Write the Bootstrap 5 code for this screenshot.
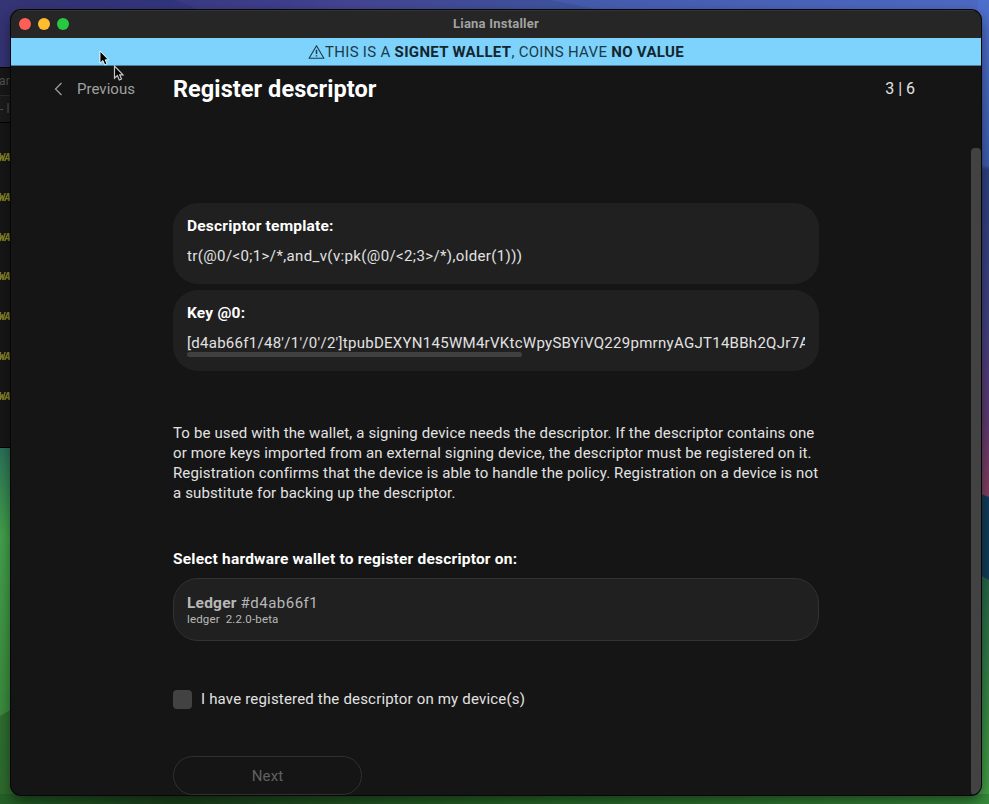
<!DOCTYPE html>
<html lang="en">
<head>
<meta charset="utf-8">
<meta name="viewport" content="width=device-width, initial-scale=1">
<title>Liana Installer</title>
<link href="https://cdn.jsdelivr.net/npm/bootstrap@5.3.0/dist/css/bootstrap.min.css" rel="stylesheet">
<style>
body{height:804px;overflow:hidden;background:#2b3a78;color:#e2e2e2;font:15px/20px Roboto,"Noto Sans",sans-serif;letter-spacing:.13px}
b,.pick{font-size:15.5px;letter-spacing:.21px}
.desk{position:absolute;inset:0;width:989px;height:804px}
.terminal{position:absolute;left:0;top:67px;width:12px;height:381px;background:#161616;border:solid #000;border-width:1px 0;color:#555;font-size:12px;white-space:nowrap}
.term-title{height:28px;line-height:27px;border-bottom:1px solid #2b2b2b;background:#171717;text-indent:-1px}
.term-tab{height:27px;line-height:27px;border-bottom:1px solid #000;background:#1b1b1b}
.term-log{padding-top:15px}
.term-log div{height:39.8px;color:#8d8d28;font:italic bold 10px/40px "DejaVu Sans Mono",monospace;letter-spacing:-.4px;text-indent:-1px}
.win{position:absolute;left:11px;top:10px;width:970px;height:785px;background:#151515;border-radius:10px;box-shadow:0 0 0 1px #070707,0 6px 14px rgba(0,0,0,.5)}
.titlebar{height:28px;background:#262626;box-shadow:inset 0 1px #333;padding-left:7.5px}
.dots{gap:7px}
.dot{width:12px;height:12px;border-radius:50%}
.dot-close{background:#ff5f57}
.dot-min{background:#febc2e}
.dot-max{background:#28c840}
.win-name{font-size:13px;font-weight:700;color:#a2a2a2;letter-spacing:.22px}
.net-banner{height:28px;background:#7dd3fc;color:#1c3a48;border-bottom:1px solid #4c8099;letter-spacing:.3px}
.net-banner b{color:#14252e;font-size:15px;letter-spacing:.32px}
.top-row{height:46px}
.previous{color:#a0a0a0;width:162px;padding-left:42px;letter-spacing:.03px}
.previous svg{margin-right:14px}
.page-title{font-size:23.5px;line-height:30px;font-weight:700;color:#fff;letter-spacing:.06px}
.step{padding-right:66px;font-size:16px;letter-spacing:0}
.content{width:646px;margin-left:162px;padding-top:91px}
.panel{background:#202020;border-radius:25px;height:81px;padding:13px 14px;margin-bottom:6px}
.panel b{color:#fff}
.panel-text{margin-top:10px;white-space:nowrap;overflow:hidden}
.template{letter-spacing:.375px}
.xpub{letter-spacing:.28px}
.h-track{width:335px;height:5px;border-radius:3px;background:#404040;margin-top:-1px}
.note{margin-top:52px;white-space:nowrap}
.pick{margin-top:46px;color:#fff}
.device{height:63px;margin-top:9px;border:1px solid #323232;border-radius:25px;background:#202020;padding:14px 13px;color:#b8b8b8}
.fingerprint{letter-spacing:.5px}
.device-meta{font-size:11.5px;line-height:13px;letter-spacing:.15px}
.check-row{margin-top:48px;gap:9px;letter-spacing:.18px}
.tick{width:19px;height:19px;border-radius:4px;background:#424242}
.next{width:189px;height:39px;margin-top:47px;border:1px solid #303030;border-radius:20px;color:#616161}
.v-track{position:absolute;right:0;top:138px;width:10px;bottom:0;background:#424242;border-radius:5px 5px 8px 5px}
.pointer{position:absolute;left:98px;top:49px}
</style>
<script src="https://cdn.jsdelivr.net/npm/bootstrap@5.3.0/dist/js/bootstrap.bundle.min.js"></script>
</head>
<body class="position-relative m-0">
<svg class="desk" viewBox="0 0 989 804" preserveAspectRatio="none">
  <defs>
    <linearGradient id="top"><stop offset="0" stop-color="#353474"/><stop offset=".17" stop-color="#31357c"/><stop offset=".35" stop-color="#444490"/><stop offset=".6" stop-color="#3e55a0"/><stop offset="1" stop-color="#5276d2"/></linearGradient>
    <linearGradient id="lf" x2="0" y2="1"><stop offset="0" stop-color="#2a7059"/><stop offset=".25" stop-color="#43a04a"/><stop offset="1" stop-color="#367f37"/></linearGradient>
    <linearGradient id="rt" x2="0" y2="1"><stop offset="0" stop-color="#4e70cc"/><stop offset=".33" stop-color="#3f5cad"/><stop offset=".34" stop-color="#2c417f"/><stop offset=".65" stop-color="#41407f"/><stop offset=".85" stop-color="#5f3a6d"/><stop offset="1" stop-color="#83405f"/></linearGradient>
    <linearGradient id="rg" x2="0" y2="1"><stop offset="0" stop-color="#256347"/><stop offset="1" stop-color="#46a045"/></linearGradient>
    <linearGradient id="bt"><stop offset="0" stop-color="#256027"/><stop offset=".18" stop-color="#1d421e"/><stop offset=".5" stop-color="#286528"/><stop offset="1" stop-color="#37893b"/></linearGradient>
  </defs>
  <path fill="url(#top)" d="M0 0H989V80H0Z"/>
  <path fill="#4b61b9" d="M550 0H989V12H610Z" opacity=".6"/>
  <path fill="#423e8c" d="M175 0H290L240 12H205Z" opacity=".5"/>
  <path fill="url(#lf)" d="M0 447H14V804H0Z"/>
  <path fill="#296129" d="M0 716L14 708V804H0Z" opacity=".7"/>
  <path fill="url(#rt)" d="M978 0H989V500H978Z"/>
  <path fill="#123b59" d="M978 493L989 497V582H978Z"/>
  <path fill="url(#rg)" d="M978 574L989 580V804H978Z"/>
  <path fill="url(#bt)" d="M0 794H989V804H0Z"/>
</svg>
<div class="terminal overflow-hidden">
  <div class="term-title">an</div><div class="term-tab">- li</div>
  <div class="term-log"><div>WA</div><div>WA</div><div>WA</div><div>WA</div><div>WA</div><div>WA</div><div>WA</div></div>
</div>
<main class="win overflow-hidden">
  <header class="titlebar d-flex align-items-center position-relative">
    <div class="dots d-flex"><span class="dot dot-close"></span><span class="dot dot-min"></span><span class="dot dot-max"></span></div>
    <div class="position-absolute start-0 end-0 text-center win-name">Liana Installer</div>
  </header>
  <div class="net-banner d-flex align-items-center justify-content-center">
    <svg width="17" height="16" viewBox="0 0 17 16" fill="none" stroke="currentColor" stroke-width="1.1" stroke-linejoin="round"><path d="M8.5 1.7 15.9 14.3H1.1Z"/><path d="M8.5 5.8V10M8.5 11.2v1.4" stroke-width="1.5"/></svg>
    <span>THIS IS A <b>SIGNET WALLET</b>, COINS HAVE <b>NO VALUE</b></span>
  </div>
  <div class="top-row d-flex align-items-center">
    <div class="previous d-flex align-items-center"><svg width="10" height="16" viewBox="0 0 10 16" fill="none" stroke="currentColor" stroke-width="1.2"><path d="M8.5 2 2.5 8l6 6"/></svg>Previous</div>
    <h1 class="page-title mb-0">Register descriptor</h1>
    <div class="step ms-auto">3 | 6</div>
  </div>
  <div class="content">
    <section class="panel"><b class="d-block">Descriptor template:</b><div class="panel-text template">tr(@0/&lt;0;1&gt;/*,and_v(v:pk(@0/&lt;2;3&gt;/*),older(1)))</div></section>
    <section class="panel"><b class="d-block">Key @0:</b><div class="panel-text xpub">[d4ab66f1/48'/1'/0'/2']tpubDEXYN145WM4rVKtcWpySBYiVQ229pmrnyAGJT14BBh2QJr7A</div><div class="h-track"></div></section>
    <p class="note mb-0">To be used with the wallet, a signing device needs the descriptor. If the descriptor contains one<br>or more keys imported from an external signing device, the descriptor must be registered on it.<br>Registration confirms that the device is able to handle the policy. Registration on a device is not<br>a substitute for backing up the descriptor.</p>
    <div class="pick fw-bold">Select hardware wallet to register descriptor on:</div>
    <div class="device"><div><b>Ledger</b> <span class="fingerprint">#d4ab66f1</span></div><div class="device-meta">ledger&nbsp; 2.2.0-beta</div></div>
    <div class="check-row d-flex align-items-center"><span class="tick"></span>I have registered the descriptor on my device(s)</div>
    <div class="next d-flex align-items-center justify-content-center">Next</div>
  </div>
  <div class="v-track"></div>
</main>
<svg class="pointer" width="28" height="34" viewBox="0 0 28 34"><path d="M2 2V14.2L4.9 11.5L6.8 16L9 15L7.2 10.8H10.5Z" fill="#000" stroke="#fff" stroke-width=".9"/><path d="M16.5 17V29.2L19.4 26.5L21.3 31L23.5 30L21.7 25.8H25Z" fill="#000" stroke="#c8c8c8" stroke-width="1.2"/></svg>
</body>
</html>
